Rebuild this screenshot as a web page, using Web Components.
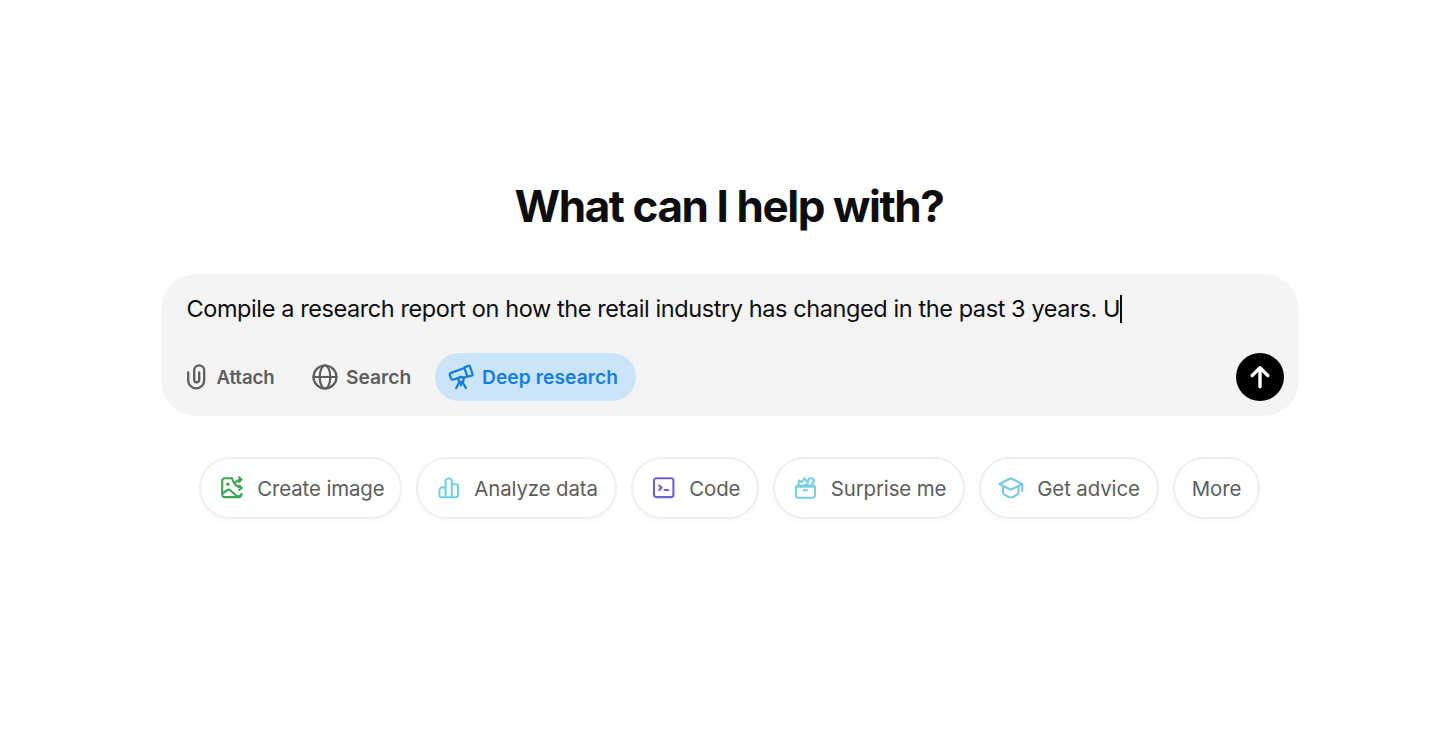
<!DOCTYPE html>
<html lang="en">
<head>
<meta charset="utf-8">
<title>What can I help with?</title>
<style>
  body {
    margin: 0;
    background: #fff;
    font-family: Inter, "Liberation Sans", sans-serif;
  }
</style>
</head>
<body>
<home-page>
  <span slot="title">What can I help with?</span>
  <prompt-box>
    <span slot="text">Compile a research report on how the retail industry has changed in the past 3 years. U</span>
    <tool-button icon="attach">Attach</tool-button>
    <tool-button icon="search">Search</tool-button>
    <tool-button icon="telescope" active>Deep research</tool-button>
  </prompt-box>
  <prompt-chip slot="chips" icon="image" style="width: 203px; color: #3fa556">Create image</prompt-chip>
  <prompt-chip slot="chips" icon="chart" style="width: 201px; color: #76d0eb">Analyze data</prompt-chip>
  <prompt-chip slot="chips" icon="code" style="width: 128.5px; color: #6c64c9">Code</prompt-chip>
  <prompt-chip slot="chips" icon="gift" style="width: 191.5px; color: #76d0e4">Surprise me</prompt-chip>
  <prompt-chip slot="chips" icon="cap" style="width: 180px; color: #76cbe0">Get advice</prompt-chip>
  <prompt-chip slot="chips" style="width: 87px">More</prompt-chip>
</home-page>

<script>
  const stroke = 'fill="none" stroke="currentColor" stroke-linecap="round" stroke-linejoin="round"';

  // width, height and inner markup of every icon
  const ICONS = {
    attach: [20, 26, `<path ${stroke} stroke-width="2.3" d="M1.2 8.5v7.8a8 8 0 0 0 16 0V6.4a5 5 0 0 0-10 0v9.4a2.5 2.5 0 0 0 5 0V8.5"/>`],
    search: [26, 26, `<g ${stroke} stroke-width="2.2"><circle cx="13" cy="13" r="11.5"/><ellipse cx="13" cy="13" rx="5.3" ry="11.5"/><path d="M1.5 13h23"/></g>`],
    telescope: [26, 26, `<g ${stroke} stroke-width="2.3">
      <path d="M16.3 3.6l4-1.8a1.3 1.3 0 0 1 1.7.8l2.5 7.4a1.3 1.3 0 0 1-.9 1.6l-4.2 1z"/>
      <path d="M16.5 4L3.1 8.9a2 2 0 0 0-1.2 2.5l1 2.9a2 2 0 0 0 2.4 1.2l4.8-1.3M15.6 13.6l3.8-1"/>
      <circle cx="13" cy="15.6" r="2.6"/><path d="M11.5 18L8.2 24M14.5 18l3.4 6M13 18.4v3"/></g>`],
    image: [24, 24, `<g ${stroke} stroke-width="2.1">
      <path d="M12 2.3H4.6a2.4 2.4 0 0 0-2.4 2.4v14a2.4 2.4 0 0 0 2.4 2.4h14.2a2.6 2.6 0 0 0 2.6-2.9"/>
      <path d="M2.8 17.4l4.4-3.2c1-.7 2-.7 3 0l5.4 4.8c2 1.7 4.4 2 5.8-.8"/>
      <path d="M12 2.3c1.4 5.8 4.2 8.6 9.5 9.4M14.4 7.6c1.6-2.6 3.4-3.8 6.8-4M19 1.3l2.5 2.2-2.3 2.3M19.4 9.5l2.3 2.3-2.4 2.2"/></g>
      <circle cx="7.8" cy="8.2" r="1.7" fill="currentColor"/>`],
    chart: [24, 24, `<path ${stroke} stroke-width="2.1" d="M8.6 21.2H4.2A1.8 1.8 0 0 1 2.4 19.4v-5a3.1 3.1 0 0 1 6.2 0zM8.6 14.4V5.3a3.1 3.1 0 0 1 6.2 0v15.9H8.6zM14.8 8.3H19a2 2 0 0 1 2 2v8.9a2 2 0 0 1-2 2h-4.2z"/>`],
    code: [24, 24, `<g ${stroke} stroke-width="2.1"><rect x="2" y="2.3" width="19.4" height="18.8" rx="2.4"/><path d="M7.2 9.4l2.4 2.4-2.4 2.3M12.6 14h3.6"/></g>`],
    gift: [24, 24, `<g ${stroke} stroke-width="2"><rect x="1.9" y="9.5" width="19" height="12.2" rx="2.2"/>
      <path d="M1.9 10.8h19M9.6 14.3h3.8M4.8 9.5V4.4L8 6l2.3-3.8 2.4 3.2M10.6 9.3c2.6.1 3.4-1.2 3.5-4.6 0-3.3 5.6-3.5 5.9 0 .1 1.6-.8 2-1.6 1.8.2 1.2-.2 2-.9 2.6"/></g>`],
    cap: [26, 24, `<g ${stroke} stroke-width="2.1"><path d="M1.4 8l11.4-5.7L24.2 8l-11.4 5.8z"/><path d="M5 10.2v6.3c0 1 4.5 5 7.8 5s7.7-4 7.7-5v-6.3M24.2 8v7"/></g>`],
    send: [24, 26, `<path ${stroke} stroke-width="3.4" d="M12 22.8V3.8M4.2 11.5L12 3.8l7.8 7.7"/>`]
  };

  const icon = (name) => {
    if (!ICONS[name]) return '';
    const [w, h, body] = ICONS[name];
    return `<svg width="${w}" height="${h}" viewBox="0 0 ${w} ${h}">${body}</svg>`;
  };

  class HomePage extends HTMLElement {
    constructor() {
      super();
      this.attachShadow({mode: 'open'}).innerHTML = `
      <style>
        :host {
          display: flex;
          flex-direction: column;
          align-items: center;
          box-sizing: border-box;
          width: 1456px;
          height: 744px;
          padding: 180px 0 0 3px;
        }
        h1 {
          margin: 0 1px 0 0;
          height: 93.5px;
          font-size: 44px;
          line-height: 53px;
          font-weight: 660;
          color: #0d0d0d;
          white-space: nowrap;
          letter-spacing: -1.42px;
        }
        nav {
          display: flex;
          gap: 14px;
          margin: 41.4px .5px 0 0;
        }
      </style>
      <h1><slot name="title"></slot></h1>
      <slot></slot>
      <nav><slot name="chips"></slot></nav>
      `;
    }
  }

  class PromptBox extends HTMLElement {
    constructor() {
      super();
      this.attachShadow({mode: 'open'}).innerHTML = `
      <style>
        :host {
          display: flex;
          flex-direction: column;
          justify-content: space-between;
          box-sizing: border-box;
          width: 1138px;
          height: 142px;
          padding: 20px 15px 15px 26px;
          border-radius: 36px;
          background: #f4f4f4;
        }
        .text {
          display: flex;
          align-items: center;
          height: 30px;
          font-size: 23.5px;
          line-height: 30px;
          letter-spacing: -.41px;
          color: #0d0d0d;
          white-space: nowrap;
        }
        .caret {
          width: 2px;
          height: 28px;
          background: #0d0d0d;
        }
        .tools {
          display: flex;
          align-items: center;
        }
        button {
          display: flex;
          align-items: center;
          justify-content: center;
          width: 48px;
          height: 48px;
          margin-left: auto;
          padding: 0;
          border: 0;
          border-radius: 50%;
          background: #000;
          color: #fff;
        }
      </style>
      <div class="text"><slot name="text"></slot><span class="caret"></span></div>
      <div class="tools"><slot></slot><button aria-label="Send">${icon('send')}</button></div>
      `;
    }
  }

  class ToolButton extends HTMLElement {
    constructor() {
      super();
      this.attachShadow({mode: 'open'}).innerHTML = `
      <style>
        :host {
          display: flex;
          align-items: center;
          gap: 8px;
          height: 48px;
          font-size: 19.2px;
          font-weight: 600;
          color: #5d5d5d;
          white-space: nowrap;
        }
        :host([icon="attach"]) {
          width: 125.5px;
          gap: 10px;
          font-size: 18.6px;
          letter-spacing: -.1px;
        }
        :host([icon="search"]) {
          width: 123px;
        }
        :host([active]) {
          box-sizing: border-box;
          width: 200.5px;
          padding-left: 13px;
          border-radius: 24px;
          background: #cce4f8;
          color: #1380e0;
          letter-spacing: .08px;
        }
        svg {
          flex: none;
        }
      </style>
      ${icon(this.getAttribute('icon'))}<slot></slot>
      `;
    }
  }

  class PromptChip extends HTMLElement {
    constructor() {
      super();
      this.attachShadow({mode: 'open'}).innerHTML = `
      <style>
        :host {
          display: flex;
          align-items: center;
          box-sizing: border-box;
          height: 62.5px;
          padding-left: 17px;
          border: 2px solid #efefef;
          border-radius: 32px;
          background: #fff;
          box-shadow: 0 3px 6px rgba(0, 0, 0, .025);
          white-space: nowrap;
        }
        :host([icon]) {
          padding-left: 19.5px;
        }
        :host([icon="gift"]) {
          padding-left: 18.5px;
        }
        :host([icon="cap"]) {
          padding-left: 17.5px;
        }
        svg {
          flex: none;
          margin-right: 13px;
        }
        span {
          font-size: 20.4px;
          letter-spacing: -.1px;
          color: #5d5d5d;
        }
      </style>
      ${icon(this.getAttribute('icon'))}<span><slot></slot></span>
      `;
    }
  }

  customElements.define('home-page', HomePage);
  customElements.define('prompt-box', PromptBox);
  customElements.define('tool-button', ToolButton);
  customElements.define('prompt-chip', PromptChip);
</script>
</body>
</html>
